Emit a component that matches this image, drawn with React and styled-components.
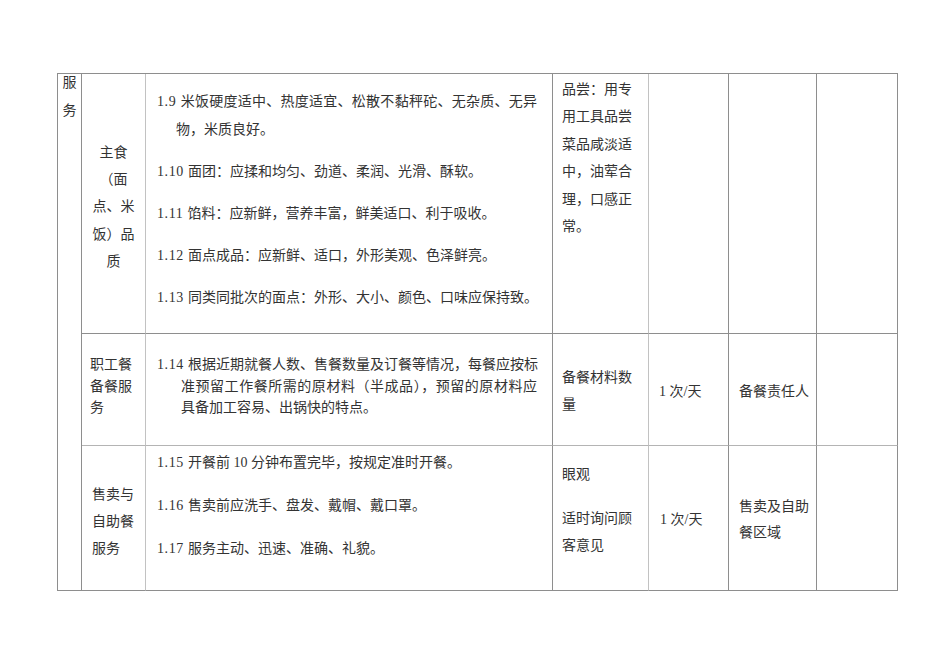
import React from 'react';
import styled, { createGlobalStyle } from 'styled-components';

const GlobalStyle = createGlobalStyle`
  html, body {
    margin: 0;
    padding: 0;
    background: #ffffff;
  }

  body {
    font-family: "Liberation Serif", "Noto Sans CJK SC", serif;
    font-size: 14px;
    color: #333333;
  }
`;

const Page = styled.div`
  width: 950px;
  height: 672px;
  box-sizing: border-box;
  padding: 73px 0 0 57px;
`;

const Sheet = styled.table`
  table-layout: fixed;
  border-collapse: separate;
  border-spacing: 0;
  width: 841px;
  border-top: 1px solid #8e8e8e;
  border-left: 1px solid #8e8e8e;
`;

const Row = styled.tr`
  height: ${({ $h }) => $h}px;
`;

const Cell = styled.td`
  box-sizing: border-box;
  border-right: 1px solid ${({ $lightRight }) => ($lightRight ? '#c2c2c2' : '#8e8e8e')};
  border-bottom: 1px solid ${({ $lightBottom }) => ($lightBottom ? '#b4b4b4' : '#8e8e8e')};
  padding: ${({ $pt = 0 }) => $pt}px ${({ $pr = 0 }) => $pr}px 0 ${({ $pl = 0 }) => $pl}px;
  vertical-align: top;
  text-align: ${({ $center }) => ($center ? 'center' : 'left')};
  line-height: ${({ $lh = 27 }) => $lh}px;
`;

const CharColumn = styled.div`
  display: flex;
  flex-direction: column;
  align-items: center;
  gap: 10px;
  line-height: 18px;
`;

const Item = styled.div`
  margin-bottom: ${({ $gap = 0 }) => $gap}px;

  &:last-child {
    margin-bottom: 0;
  }
`;

const Line = styled.div`
  white-space: nowrap;
  padding-left: ${({ $indent = 0 }) => $indent}px;
  text-align: ${({ $full }) => ($full ? 'justify' : 'inherit')};
  text-align-last: ${({ $full }) => ($full ? 'justify' : 'auto')};
`;

const Num = styled.span`
  letter-spacing: 0.6px;
`;

const Lines = ({ lines }) =>
  lines.map((l) => <Line key={l}>{l}</Line>);

// "1.9 text" -> number in serif with a touch of spacing, rest as is
const Clause = ({ lines, indent, gap }) => (
  <Item $gap={gap}>
    {lines.map((l, i) => {
      const m = i === 0 ? l.match(/^(\d+\.\d+ )(.*)$/) : null;
      return (
        <Line key={l} $indent={i > 0 ? indent : 0} $full={i < lines.length - 1}>
          {m ? (
            <>
              <Num>{m[1]}</Num>
              {m[2]}
            </>
          ) : (
            l
          )}
        </Line>
      );
    })}
  </Item>
);

const stapleFood = [
  { lines: ['1.9 米饭硬度适中、热度适宜、松散不黏秤砣、无杂质、无异', '物，米质良好。'], indent: 19 },
  { lines: ['1.10 面团：应揉和均匀、劲道、柔润、光滑、酥软。'] },
  { lines: ['1.11 馅料：应新鲜，营养丰富，鲜美适口、利于吸收。'] },
  { lines: ['1.12 面点成品：应新鲜、适口，外形美观、色泽鲜亮。'] },
  { lines: ['1.13 同类同批次的面点：外形、大小、颜色、口味应保持致。'] },
];

const selling = [
  '1.15 开餐前 10 分钟布置完毕，按规定准时开餐。',
  '1.16 售卖前应洗手、盘发、戴帽、戴口罩。',
  '1.17 服务主动、迅速、准确、礼貌。',
];

export default function App() {
  return (
    <>
      <GlobalStyle />
      <Page>
        <Sheet>
          <colgroup>
            <col style={{ width: 24 }} />
            <col style={{ width: 64 }} />
            <col style={{ width: 407 }} />
            <col style={{ width: 96 }} />
            <col style={{ width: 80 }} />
            <col style={{ width: 88 }} />
            <col style={{ width: 81 }} />
          </colgroup>
          <tbody>
            <Row $h={260}>
              <Cell rowSpan={3} $center>
                <CharColumn>
                  <span>服</span>
                  <span>务</span>
                </CharColumn>
              </Cell>
              <Cell $center $lightRight $pt={65} $lh={27.2}>
                <Lines lines={['主食', '（面', '点、米', '饭）品', '质']} />
              </Cell>
              <Cell $pt={14} $pl={11} $pr={15} $lh={28}>
                {stapleFood.map((c) => (
                  <Clause key={c.lines[0]} lines={c.lines} indent={c.indent} gap={14} />
                ))}
              </Cell>
              <Cell $lightRight $pt={2} $pl={9} $lh={27.4}>
                <Lines lines={['品尝：用专', '用工具品尝', '菜品咸淡适', '中，油荤合', '理，口感正', '常。']} />
              </Cell>
              <Cell />
              <Cell />
              <Cell />
            </Row>

            <Row $h={112}>
              <Cell $lightRight $lightBottom $pt={20} $pl={8} $lh={21.5}>
                <Lines lines={['职工餐', '备餐服', '务']} />
              </Cell>
              <Cell $lightBottom $pt={20} $pl={11} $pr={15} $lh={21.5}>
                <Clause
                  indent={24}
                  lines={[
                    '1.14 根据近期就餐人数、售餐数量及订餐等情况，每餐应按标',
                    '准预留工作餐所需的原材料（半成品），预留的原材料应',
                    '具备加工容易、出锅快的特点。',
                  ]}
                />
              </Cell>
              <Cell $lightRight $lightBottom $pt={30} $pl={9}>
                <Lines lines={['备餐材料数', '量']} />
              </Cell>
              <Cell $lightBottom $pt={44} $pl={10}>
                1 次/天
              </Cell>
              <Cell $lightBottom $pt={44} $pl={10}>
                备餐责任人
              </Cell>
              <Cell $lightBottom />
            </Row>

            <Row $h={145}>
              <Cell $lightRight $pt={35} $pl={10}>
                <Lines lines={['售卖与', '自助餐', '服务']} />
              </Cell>
              <Cell $pt={3} $pl={11} $pr={15} $lh={28}>
                {selling.map((s) => (
                  <Clause key={s} lines={[s]} gap={15} />
                ))}
              </Cell>
              <Cell $lightRight $pt={15} $pl={9}>
                <Item $gap={17}>眼观</Item>
                <Item>
                  <Lines lines={['适时询问顾', '客意见']} />
                </Item>
              </Cell>
              <Cell $pt={60} $pl={11}>
                1 次/天
              </Cell>
              <Cell $pt={48} $pl={10} $lh={26}>
                <Lines lines={['售卖及自助', '餐区域']} />
              </Cell>
              <Cell />
            </Row>
          </tbody>
        </Sheet>
      </Page>
    </>
  );
}
